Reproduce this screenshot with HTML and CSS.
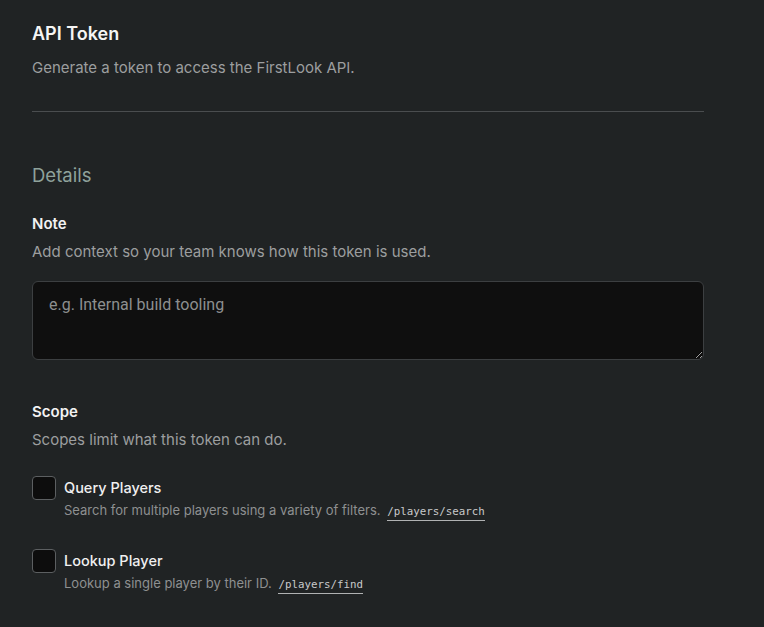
FILE: index.html
```html
<!DOCTYPE html>
<html lang="en">
<head>
<meta charset="utf-8">
<title>API Token</title>
<link rel="stylesheet" href="styles.css">
</head>
<body>
<main class="page">
  <header class="head">
    <h1 class="title">API Token</h1>
    <p class="subtitle">Generate a token to access the FirstLook API.</p>
  </header>
  <hr class="divider">
  <section class="section">
    <h2 class="section-title">Details</h2>
    <div class="field">
      <label class="label" for="note">Note</label>
      <p class="help">Add context so your team knows how this token is used.</p>
      <textarea id="note" class="textarea" placeholder="e.g. Internal build tooling"></textarea>
    </div>
    <div class="field scope">
      <div class="label">Scope</div>
      <p class="help">Scopes limit what this token can do.</p>
      <ul class="options">
        <li class="option">
          <span class="checkbox"></span>
          <div class="option-text">
            <div class="option-name">Query Players</div>
            <div class="option-desc">Search for multiple players using a variety of filters. <code class="code">/players/search</code></div>
          </div>
        </li>
        <li class="option">
          <span class="checkbox"></span>
          <div class="option-text">
            <div class="option-name">Lookup Player</div>
            <div class="option-desc">Lookup a single player by their ID. <code class="code">/players/find</code></div>
          </div>
        </li>
      </ul>
    </div>
  </section>
</main>
</body>
</html>
```
FILE: styles.css
```css
html, body {
  margin: 0;
  padding: 0;
  background: #202324;
}
body {
  font-family: Inter, "Noto Sans", "Liberation Sans", sans-serif;
  color: #f2f2f2;
}
.page {
  width: 672px;
  padding: 22px 32px 40px;
}
.title {
  margin: 0;
  font-size: 18px;
  font-weight: 600;
  line-height: 24px;
  color: #f5f5f5;
}
.subtitle {
  margin: 12px 0 0;
  font-size: 15px;
  line-height: 20px;
  color: #9c9e9f;
}
.divider {
  margin: 33px 0 0;
  border: 0;
  height: 1px;
  background: #4a4d4f;
}
.section {
  padding-top: 51px;
}
.section-title {
  margin: 0;
  font-size: 18.5px;
  font-weight: 400;
  line-height: 24px;
  color: #8fa29c;
}
.field {
  margin-top: 27px;
}
.label {
  display: block;
  font-size: 15px;
  font-weight: 600;
  line-height: 20px;
  color: #f2f2f2;
}
.help {
  margin: 8px 0 0;
  font-size: 15px;
  line-height: 20px;
  color: #9c9e9f;
}
.textarea {
  display: block;
  box-sizing: border-box;
  width: 100%;
  height: 79px;
  margin-top: 19px;
  padding: 13px 16px;
  background: #0f0f0f;
  border: 1px solid #3c3f41;
  border-radius: 6px;
  color: #e0e0e0;
  font-family: Roboto, "Liberation Sans", sans-serif;
  font-size: 16px;
  line-height: 20px;
  resize: vertical;
  outline: none;
}
.textarea::placeholder {
  color: #8d8f90;
}
.scope {
  margin-top: 42px;
}
.options {
  list-style: none;
  margin: 26px 0 0;
  padding: 0;
  display: flex;
  flex-direction: column;
  gap: 27px;
}
.option {
  display: flex;
  align-items: flex-start;
  gap: 8px;
}
.checkbox {
  flex: none;
  box-sizing: border-box;
  width: 24px;
  height: 24px;
  border: 1px solid #5c5f61;
  border-radius: 4px;
  background: #0d0d0d;
}
.option-text {
  display: flex;
  flex-direction: column;
}
.option-name {
  font-size: 14.5px;
  font-weight: 500;
  line-height: 24px;
  color: #f0f0f0;
}
.option-desc {
  font-size: 13px;
  line-height: 20px;
  color: #8e9091;
}
.code {
  margin-left: 3px;
  font-family: "DejaVu Sans Mono", "Liberation Mono", monospace;
  font-size: 10.8px;
  color: #c8c9ca;
  border-bottom: 1px solid #b0b2b3;
  padding-bottom: 2px;
}
```
